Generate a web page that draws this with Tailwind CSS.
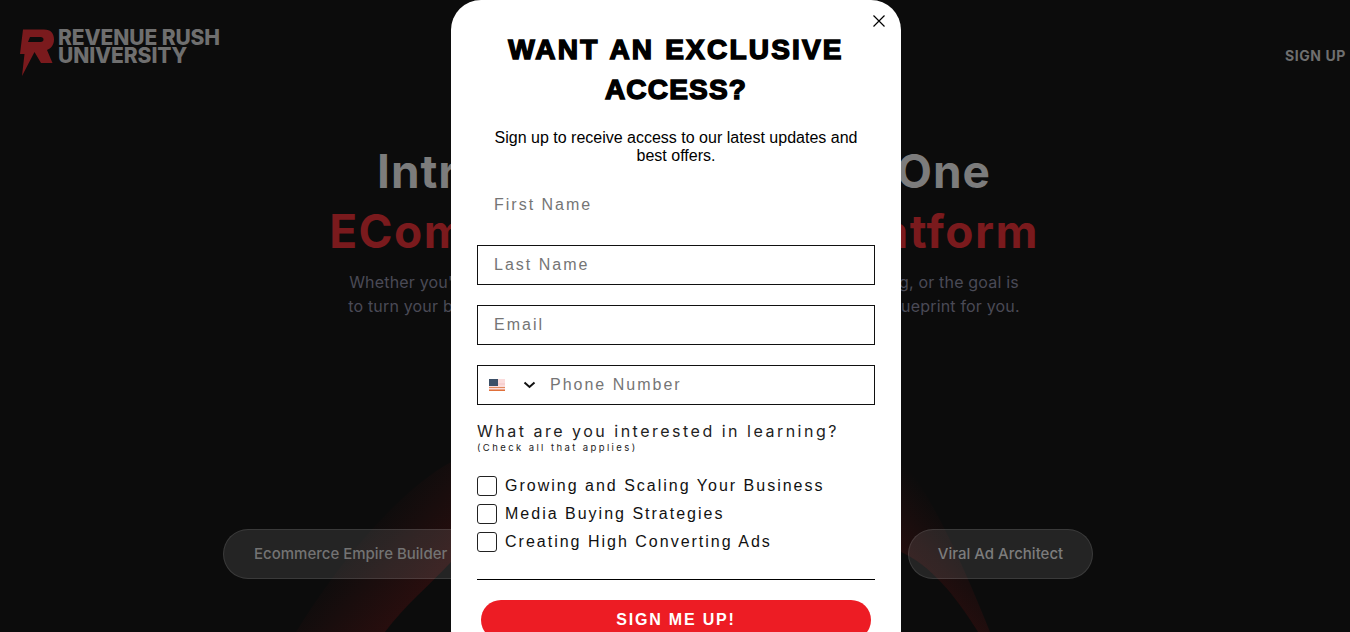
<!DOCTYPE html>
<html lang="en">
<head>
<meta charset="utf-8">
<title>Revenue Rush University</title>
<script src="https://cdn.jsdelivr.net/npm/@tailwindcss/browser@4"></script>
</head>
<body class="m-0 bg-[#0c0c0c]">
<div class="relative h-[632px] w-[1350px] overflow-hidden bg-[#0c0c0c] font-['Inter',sans-serif]">

  <!-- red glow arcs behind the pills -->
  <svg class="absolute left-0 top-0" width="1350" height="632" viewBox="0 0 1350 632" fill="none" aria-hidden="true">
    <defs>
      <linearGradient id="gl" x1="360" y1="530" x2="440" y2="600" gradientUnits="userSpaceOnUse">
        <stop offset="0" stop-color="#2e0f0f" stop-opacity="0"/>
        <stop offset="1" stop-color="#2e0e0e"/>
      </linearGradient>
      <linearGradient id="gr" x1="965" y1="530" x2="900" y2="590" gradientUnits="userSpaceOnUse">
        <stop offset="0" stop-color="#2e0f0f" stop-opacity="0"/>
        <stop offset="1" stop-color="#2e0e0e"/>
      </linearGradient>
    </defs>
    <path d="M296 632C340 560 400 490 451 462V632Z" fill="url(#gl)"/>
    <path d="M990 632C965 570 935 500 901 458V632Z" fill="url(#gr)"/>
    <path d="M385 632C405 605 430 585 451 562V632Z" fill="#0c0c0c"/>
    <path d="M978 632C955 595 930 565 901 552V632Z" fill="#0c0c0c"/>
  </svg>

  <div class="relative flex h-full flex-col">
    <!-- header -->
    <header class="flex h-[112px] items-start justify-between pr-1">
      <div class="ml-[20px] mt-[28px] flex items-start">
        <svg width="34" height="48" viewBox="0 0 34 48" aria-hidden="true">
          <path fill="#7a1a1d" fill-rule="evenodd" d="M3 1.500H24C31 1.500 34 5.500 34 11.500C34 17 31 20.500 27 22L32.500 35H21L14.500 24L2 48L4.500 26H0L3 1.500ZM10 9L8 14H20.500C22.500 14 23.500 13 23.500 11.500C23.500 10 22.500 9 20.500 9Z"/>
        </svg>
        <div class="ml-[4px] mt-px flex flex-col font-['Inter',sans-serif] text-[21px] font-extrabold leading-[18px] tracking-[-0.1px] text-[#6f6f6f]">
          <span>REVENUE RUSH</span>
          <span>UNIVERSITY</span>
        </div>
      </div>
      <a class="mt-[47px] text-[14px] font-bold leading-[18px] tracking-[0.6px] text-[#6f6f6f]">SIGN UP</a>
    </header>

    <!-- hero -->
    <section class="ml-[18px] flex flex-col items-center text-center">
      <h1 class="mt-[29px] text-[46px] font-bold leading-[60px] tracking-[0.95px] text-[#7c7c7c]">Introducing the All-In-One</h1>
      <h2 class="text-[46px] font-bold leading-[60px] tracking-[1.45px] text-[#7a1a1d]">ECommerce Training Platform</h2>
      <p class="mt-[9px] w-[680px] text-[16px] font-normal leading-[24px] tracking-[0.18px] text-[#4a4a56]">Whether you're just starting out, looking to scale what's already working, or the goal is to turn your business into a truly thriving empire, we have the perfect blueprint for you.</p>
    </section>

    <!-- pills -->
    <div class="ml-[223px] mt-[211px] flex w-[870px] justify-between">
      <span class="flex h-[50px] items-center rounded-full border border-white/10 bg-white/10 px-[30px] text-[15px] font-medium text-[#737373]">Ecommerce Empire Builder</span>
      <span class="flex h-[50px] w-[185px] items-center justify-center rounded-full border border-white/10 bg-white/10 text-[15px] font-medium text-[#7c7c7c]">Viral Ad Architect</span>
    </div>
  </div>

  <!-- modal -->
  <div class="absolute left-[451px] top-0 h-[660px] w-[450px] rounded-[30px] bg-white px-[26px] font-['Liberation_Sans',Arial,sans-serif] text-black">
    <button class="absolute right-[15px] top-[14px] flex h-[14px] w-[14px] items-center justify-center" aria-label="Close">
      <svg width="14" height="14" viewBox="0 0 14 14" fill="none"><path d="M1.500 1.500L12.500 12.500M12.500 1.500L1.500 12.500" stroke="#000" stroke-width="1.200"/></svg>
    </button>

    <h3 class="flex flex-col items-center pt-[30px] text-center text-[28px] font-bold leading-[40px] text-black [-webkit-text-stroke:1.5px_#000]">
      <span class="tracking-[2.2px] [word-spacing:1px]">WANT AN EXCLUSIVE</span>
      <span class="tracking-[1.2px]">ACCESS?</span>
    </h3>
    <p class="mx-auto mt-[19px] w-[380px] text-center text-[16px] leading-[18px]">Sign up to receive access to our latest updates and best offers.</p>

    <form class="mt-[20px] flex flex-col">
      <input class="h-[40px] w-full border border-white bg-white px-4 text-[16px] tracking-[2px] placeholder:text-[#757575]" placeholder="First Name">
      <input class="mt-[20px] h-[40px] w-full border border-[#111] bg-white px-4 text-[16px] tracking-[2px] placeholder:text-[#757575]" placeholder="Last Name">
      <input class="mt-[20px] h-[40px] w-full border border-[#111] bg-white px-4 text-[16px] tracking-[2px] placeholder:text-[#757575]" placeholder="Email">
      <div class="mt-[20px] flex h-[40px] w-full items-center border border-[#111] bg-white">
        <svg class="ml-[11px]" width="16" height="12" viewBox="0 0 16 12" aria-hidden="true">
          <rect width="16" height="12" fill="#fbdcdc"/>
          <rect y="4.500" width="16" height="1" fill="#f3c4c4"/>
          <rect y="8" width="16" height="1" fill="#e08a5e"/>
          <rect y="10.500" width="16" height="1.500" fill="#e0703a"/>
          <rect width="9" height="7" fill="#3c5068"/>
        </svg>
        <svg class="ml-[18px]" width="13" height="8" viewBox="0 0 13 8" fill="none" aria-hidden="true"><path d="M1.500 1.500L6.500 6L11.500 1.500" stroke="#111" stroke-width="2"/></svg>
        <input class="ml-[14px] h-full min-w-0 flex-1 bg-transparent text-[16px] tracking-[2px] placeholder:text-[#757575]" placeholder="Phone Number">
      </div>

      <p class="mt-[16px] font-['Inter',sans-serif] text-[16px] leading-[20px] tracking-[2.5px] text-[#222]">What are you interested in learning?</p>
      <p class="mt-px font-['Inter',sans-serif] text-[9.500px] leading-[12px] tracking-[2.4px] text-[#222]">(Check all that applies)</p>

      <div class="mt-[22px] flex flex-col gap-[8px]">
        <label class="flex h-[20px] items-center gap-[8px] text-[16px] tracking-[2px] text-[#111]"><span class="h-[20px] w-[20px] rounded-[3px] border border-[#222]"></span>Growing and Scaling Your Business</label>
        <label class="flex h-[20px] items-center gap-[8px] text-[16px] tracking-[2px] text-[#111]"><span class="h-[20px] w-[20px] rounded-[3px] border border-[#222]"></span>Media Buying Strategies</label>
        <label class="flex h-[20px] items-center gap-[8px] text-[16px] tracking-[2px] text-[#111]"><span class="h-[20px] w-[20px] rounded-[3px] border border-[#222]"></span>Creating High Converting Ads</label>
      </div>

      <hr class="mt-[27px] border-t border-black">
      <button type="button" class="mx-auto mt-[20px] h-[40px] w-[390px] rounded-full bg-[#ed1c24] text-[16px] font-bold tracking-[1.8px] text-white">SIGN ME UP!</button>
    </form>
  </div>
</div>
</body>
</html>
